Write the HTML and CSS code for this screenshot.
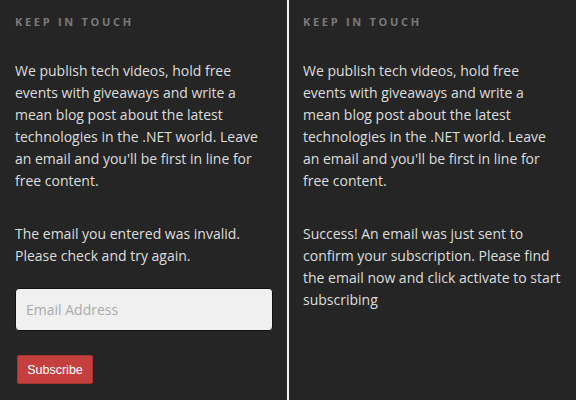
FILE: index.html
```html
<!DOCTYPE html>
<html>
<head>
<meta charset="utf-8">
<link rel="stylesheet" href="styles.css">
</head>
<body>
<div class="page">
  <section class="panel panel-left">
    <h2 class="title">Keep in touch</h2>
    <p class="text">We publish tech videos, hold free events with giveaways and write a mean blog post about the latest technologies in the .NET world. Leave an email and you'll be first in line for free content.</p>
    <p class="text msg">The email you entered was invalid. Please check and try again.</p>
    <input class="email" type="text" placeholder="Email Address">
    <button class="btn">Subscribe</button>
  </section>
  <div class="divider"></div>
  <section class="panel panel-right">
    <h2 class="title">Keep in touch</h2>
    <p class="text">We publish tech videos, hold free events with giveaways and write a mean blog post about the latest technologies in the .NET world. Leave an email and you'll be first in line for free content.</p>
    <p class="text msg">Success! An email was just sent to confirm your subscription. Please find the email now and click activate to start subscribing</p>
  </section>
</div>
</body>
</html>
```
FILE: styles.css
```css
* { box-sizing: border-box; }
html, body { margin: 0; padding: 0; }
body {
  background: #252525;
  font-family: "Open Sans", "DejaVu Sans", sans-serif;
  width: 576px;
  height: 400px;
  overflow: hidden;
}
.page {
  display: flex;
  height: 400px;
}
.panel {
  display: flex;
  flex-direction: column;
  align-items: flex-start;
  background: #252525;
  padding-top: 15px;
}
.panel-left { width: 287px; padding-left: 15px; padding-right: 14px; }
.panel-right { width: 287px; padding-left: 14px; padding-right: 14px; }
.divider { width: 2px; background: #f2f2f2; }
.title {
  margin: 0;
  font-size: 11px;
  line-height: 14px;
  font-weight: 700;
  letter-spacing: 2.7px;
  text-transform: uppercase;
  color: #7a7a7a;
}
.text {
  margin: 31px 0 0;
  font-size: 14px;
  line-height: 22px;
  color: #dedede;
}
.text.msg { margin-top: 31px; }
.email {
  margin-top: 21px;
  width: 258px;
  height: 43px;
  border: 1px solid #111;
  border-radius: 4px;
  background: #f0f0f0;
  padding: 0 10px;
  font-family: "Open Sans", sans-serif;
  font-size: 14px;
  color: #333;
  outline: none;
}
.email::placeholder { color: #ababab; }
.btn {
  margin: 24px 0 0 2px;
  width: 76px;
  height: 29px;
  background: #c63f3f;
  border: 1px solid #a83232;
  border-radius: 2px;
  color: #fff;
  font-family: "Liberation Sans", Arial, sans-serif;
  font-size: 12.5px;
  padding: 0;
}
```
